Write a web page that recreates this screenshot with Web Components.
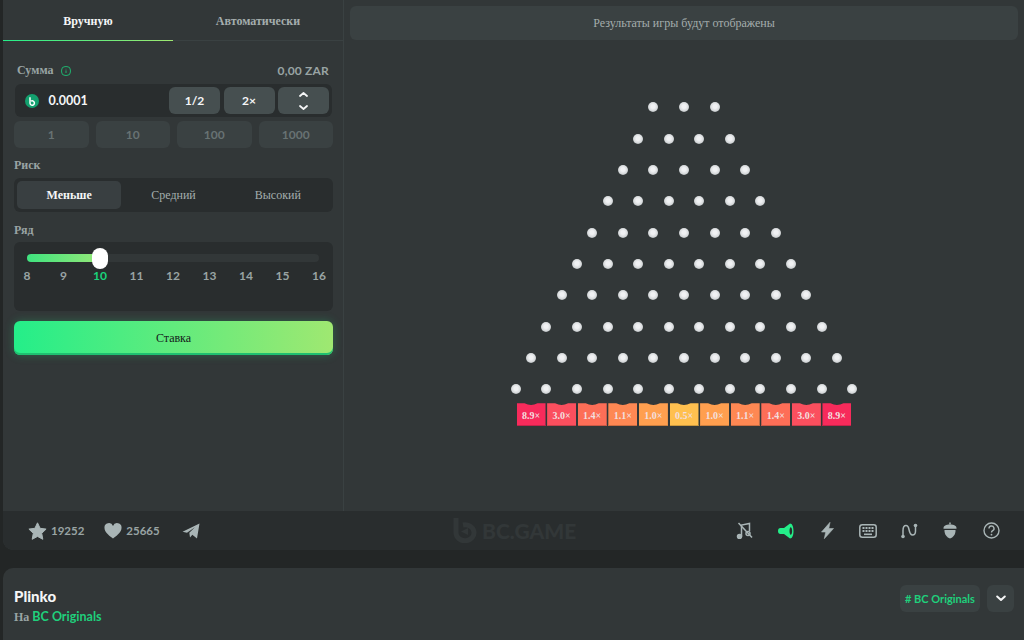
<!DOCTYPE html>
<html lang="ru">
<head>
<meta charset="utf-8">
<title>Plinko</title>
<style>
  html, body { margin: 0; height: 100%; background: #232626; overflow: hidden; }
  body { font-family: "Liberation Serif", serif; color: #b3bec1; }
  plinko-page { display: block; }
</style>
</head>
<body>
<plinko-page></plinko-page>
<script>
const LATIN = `Lato, "Liberation Sans", sans-serif`;

/* ── Left panel: manual / auto tabs ───────────────────── */
class BetTabs extends HTMLElement {
  connectedCallback() {
    this.attachShadow({ mode: "open" }).innerHTML = `
      <style>
        :host { display: flex; height: 41px; border-bottom: 1px solid #3a4142; box-sizing: border-box; font-size: 12px; font-weight: 700; }
        div { flex: 1; display: flex; align-items: center; justify-content: center; padding-top: 3px; color: #a4adad; }
        .on { color: #f5f6f7; position: relative; }
        .on::after { content: ""; position: absolute; left: 0; right: 0; bottom: -1px; height: 1px; background: linear-gradient(90deg, #24ee89, #9fe871); }
      </style>
      <div class="on">Вручную</div><div>Автоматически</div>`;
  }
}
customElements.define("bet-tabs", BetTabs);

/* ── Amount field with quick buttons ──────────────────── */
class BetAmount extends HTMLElement {
  connectedCallback() {
    this.attachShadow({ mode: "open" }).innerHTML = `
      <style>
        :host { display: block; }
        .head { display: flex; align-items: center; height: 16px; margin: 0 4px 6px 3px; padding-top: 1px; box-sizing: border-box; font-size: 12px; font-weight: 700; color: #99a4a4; }
        .head svg { margin-left: 8px; }
        .head span:last-child { margin-left: auto; font: 700 12px ${LATIN}; color: #99a4a4; letter-spacing: .2px; }
        .field { display: flex; align-items: center; height: 33px; box-sizing: border-box; margin: 0 1px; padding: 3px 3px 3px 10px; background: #292d2e; border-radius: 6px; gap: 3.5px; }
        .coin { width: 14px; height: 14px; margin-right: 6px; flex: none; }
        .val { flex: 1; font: 700 12.5px ${LATIN}; color: #f5f6f7; }
        .btn { width: 51px; height: 27px; border-radius: 6px; background: #464f50; color: #f5f6f7; font: 700 12px ${LATIN}; display: flex; align-items: center; justify-content: center; }
        .arrows { flex-direction: column; gap: 8px; }
        .arrows svg { display: block; }
        .quick { display: grid; grid-template-columns: repeat(4, 1fr); gap: 7px; margin-top: 4px; }
        .quick div { height: 27px; border-radius: 6px; background: #3a4142; color: #687273; font: 700 12px ${LATIN}; display: flex; align-items: center; justify-content: center; }
      </style>
      <div class="head"><span>Сумма</span>
        <svg width="10" height="10" viewBox="0 0 10 10" fill="none"><rect x=".6" y=".6" width="8.8" height="8.8" rx="3.4" stroke="#1fb36f" stroke-width="1"/><path d="M5 4.4V7M5 2.8v.6" stroke="#1fb36f" stroke-width="1"/></svg>
        <span>0,00 ZAR</span></div>
      <div class="field">
        <svg class="coin" viewBox="0 0 14 14"><circle cx="7" cy="7" r="7" fill="#13a06e"/><path d="M5 3.2V9a2.2 2.2 0 1 0 1-1.8" fill="none" stroke="#fff" stroke-width="1.5"/></svg>
        <span class="val">0.0001</span>
        <div class="btn">1/2</div><div class="btn">2×</div>
        <div class="btn arrows">
          <svg width="9" height="5" viewBox="0 0 9 5"><path d="M1 4l3.5-3L8 4" fill="none" stroke="#f5f6f7" stroke-width="1.8" stroke-linecap="round" stroke-linejoin="round"/></svg>
          <svg width="9" height="5" viewBox="0 0 9 5"><path d="M1 1l3.5 3L8 1" fill="none" stroke="#f5f6f7" stroke-width="1.8" stroke-linecap="round" stroke-linejoin="round"/></svg>
        </div>
      </div>
      <div class="quick"><div>1</div><div>10</div><div>100</div><div>1000</div></div>`;
  }
}
customElements.define("bet-amount", BetAmount);

/* ── Risk selector ────────────────────────────────────── */
class BetRisk extends HTMLElement {
  connectedCallback() {
    this.attachShadow({ mode: "open" }).innerHTML = `
      <style>
        :host { display: block; }
        label { display: block; height: 15px; margin-bottom: 6px; font-size: 12px; line-height: 17px; font-weight: 700; color: #99a4a4; }
        .box { display: grid; grid-template-columns: repeat(3, 1fr); height: 34px; box-sizing: border-box; padding: 3px; background: #292d2e; border-radius: 6px; font-size: 12px; color: #a4adad; }
        .box div { display: flex; align-items: center; justify-content: center; border-radius: 5px; }
        .on { background: #393f41; color: #f5f6f7; font-weight: 700; }
      </style>
      <label>Риск</label>
      <div class="box"><div class="on">Меньше</div><div>Средний</div><div>Высокий</div></div>`;
  }
}
customElements.define("bet-risk", BetRisk);

/* ── Row count slider ─────────────────────────────────── */
class BetRows extends HTMLElement {
  connectedCallback() {
    const marks = [8, 9, 10, 11, 12, 13, 14, 15, 16];
    this.attachShadow({ mode: "open" }).innerHTML = `
      <style>
        :host { display: block; }
        label { display: block; height: 15px; margin-bottom: 6px; font-size: 12px; line-height: 19px; font-weight: 700; color: #99a4a4; }
        .box { height: 69px; box-sizing: border-box; padding: 12px 14px 0 13px; background: #292d2e; border-radius: 6px; }
        .track { position: relative; height: 8px; border-radius: 4px; background: #323738; }
        .fill { width: 25%; height: 100%; border-radius: 4px 0 0 4px; background: linear-gradient(90deg, #3fe37f, #95e878); }
        .thumb { position: absolute; left: 25%; top: -6.5px; width: 16px; height: 21px; margin-left: -8px; border-radius: 8px; background: #fff; }
        .marks { display: flex; justify-content: space-between; margin: 6px -8px 0; font: 700 12px ${LATIN}; color: #99a4a4; }
        .marks span { width: 16px; text-align: center; }
        .marks .on { color: #19d37a; }
      </style>
      <label>Ряд</label>
      <div class="box">
        <div class="track"><div class="fill"></div><div class="thumb"></div></div>
        <div class="marks">${marks.map(m => `<span class="${m === 10 ? "on" : ""}">${m}</span>`).join("")}</div>
      </div>`;
  }
}
customElements.define("bet-rows", BetRows);

/* ── Bet button ───────────────────────────────────────── */
class BetButton extends HTMLElement {
  connectedCallback() {
    this.attachShadow({ mode: "open" }).innerHTML = `
      <style>
        :host { display: flex; align-items: center; justify-content: center; height: 34px; border-radius: 6px; font-size: 12px; color: #14191a;
          background: linear-gradient(90deg, #24ee89, #9fe871);
          box-shadow: inset 0 -2px 0 #1fc070, 0 0 10px rgba(36,238,137,.25); }
      </style><slot></slot>`;
  }
}
customElements.define("bet-button", BetButton);

/* ── Left panel ───────────────────────────────────────── */
class BetPanel extends HTMLElement {
  connectedCallback() {
    this.attachShadow({ mode: "open" }).innerHTML = `
      <style>
        :host { display: block; width: 341px; flex: none; box-sizing: border-box; border-right: 1px solid #3a4142; }
        .body { display: flex; flex-direction: column; padding: 21px 10px 0 11px; }
        bet-risk { margin-top: 9px; }
        bet-rows { margin-top: 9px; }
        bet-button { margin-top: 10px; }
      </style>
      <bet-tabs></bet-tabs>
      <div class="body">
        <bet-amount></bet-amount>
        <bet-risk></bet-risk>
        <bet-rows></bet-rows>
        <bet-button>Ставка</bet-button>
      </div>`;
  }
}
customElements.define("bet-panel", BetPanel);

/* ── Plinko board: pegs and multipliers ───────────────── */
class PlinkoBoard extends HTMLElement {
  connectedCallback() {
    const buckets = [
      ["8.9", "#f72b5b", "#c4234a"], ["3.0", "#fb4f5e", "#c8404c"], ["1.4", "#fd6e57", "#cb5946"],
      ["1.1", "#fe8853", "#cb6d42"], ["1.0", "#ff9f4f", "#cc7f3f"], ["0.5", "#ffc04f", "#cc9a3f"],
      ["1.0", "#ff9f4f", "#cc7f3f"], ["1.1", "#fe8853", "#cb6d42"], ["1.4", "#fd6e57", "#cb5946"],
      ["3.0", "#fb4f5e", "#c8404c"], ["8.9", "#f72b5b", "#c4234a"],
    ];
    let rows = "";
    for (let r = 0; r < 10; r++) {
      rows += `<div class="row">${"<i></i>".repeat(r + 3)}</div>`;
    }
    this.attachShadow({ mode: "open" }).innerHTML = `
      <style>
        :host { display: flex; flex: 1; flex-direction: column; min-width: 0; padding: 6px 6px 0; box-sizing: border-box; }
        .note { height: 34px; flex: none; display: flex; align-items: center; justify-content: center; border-radius: 6px; background: #3a4142; font-size: 12px; color: #a4adad; }
        .pegs { display: flex; flex-direction: column; align-items: center; gap: 21.33px; margin-top: 62.4px; }
        .row { display: flex; gap: 20.6px; height: 10px; }
        i { width: 10px; height: 10px; border-radius: 50%; background: radial-gradient(circle at 50% 45%, #f0f1f3 25%, #d5d8da 60%, #6f7677 100%); }
        .buckets { display: flex; justify-content: center; gap: 1.6px; margin-top: 9px; }
        .bucket { width: 29px; height: 23px; box-sizing: border-box; padding-top: 2px; display: flex; align-items: center; justify-content: center;
          font-size: 10px; font-weight: 700; color: #f3dfdf;
          clip-path: path("M0 0H8Q14.5 3.500 21 0H29V23H0Z"); }
      </style>
      <div class="note">Результаты игры будут отображены</div>
      <div class="pegs">${rows}</div>
      <div class="buckets">${buckets.map(([v, c, d]) =>
        `<div class="bucket" style="background:${c};box-shadow:inset 0 -1px 0 ${d}">${v}×</div>`).join("")}</div>`;
  }
}
customElements.define("plinko-board", PlinkoBoard);

/* ── Bottom toolbar ───────────────────────────────────── */
class GameToolbar extends HTMLElement {
  connectedCallback() {
    const c = "#a9b5b6";
    this.attachShadow({ mode: "open" }).innerHTML = `
      <style>
        :host { display: flex; position: relative; align-items: center; height: 39px; box-sizing: border-box; padding: 0 12.5px 0 25px; background: #292d2e; font: 700 11.5px ${LATIN}; color: #99a4a4; border-radius: 0 0 0 10px; }
        .stat { display: flex; align-items: center; gap: 4px; margin-right: 20px; }
        svg { display: block; }
        .logo { position: absolute; left: 450px; top: 7px; display: flex; align-items: center; gap: 5px; font: 900 21px ${LATIN}; color: #323738; }
        .tools { margin-left: auto; display: flex; align-items: center; }
        .tools span { width: 41px; display: flex; justify-content: center; }
      </style>
      <span class="stat"><svg width="19" height="18" viewBox="0 0 19 18"><path d="M9.5.8l2.600 5.500 6 .8-4.400 4.200 1.100 6-5.300-2.900-5.300 2.900 1.100-6L.9 7.100l6-.8z" fill="${c}" stroke="${c}" stroke-linejoin="round"/></svg>19252</span>
      <span class="stat"><svg width="18" height="16" viewBox="0 0 18 16"><path d="M9 15.500C3.500 11.500.5 8.600.5 5A4.400 4.400 0 0 1 9 3a4.400 4.400 0 0 1 8.500 2c0 3.600-3 6.500-8.500 10.500z" fill="${c}"/></svg>25665</span>
      <svg width="18" height="16" viewBox="0 0 18 16" style="margin-left:2px"><path d="M.5 8.700L17.500.5 15 15.500 10.300 11.700 8 14.500 7.300 9.800 13 4.300 5 9.800z" fill="${c}"/></svg>
      <div class="logo">
        <svg width="24" height="25" viewBox="0 0 24 25" fill="none"><path d="M3 0v15a9 8 0 1 0 7-8" stroke="#323738" stroke-width="5"/><path d="M8 13.500l7-3.500v7z" fill="#323738"/></svg>
        BC.GAME
      </div>
      <div class="tools">
        <span><svg width="18" height="17" viewBox="0 0 18 17" fill="none" stroke="${c}" stroke-width="1.500"><circle cx="3.500" cy="14.500" r="2" fill="${c}"/><path d="M5.500 14.500V3l8-1.500V9"/><circle cx="12" cy="11.500" r="2"/><path d="M2.500 1l13.500 14.500"/></svg></span>
        <span><svg width="16" height="16" viewBox="0 0 16 16"><path d="M2.500 5H6L12 .5c2.300 0 3.500 3.300 3.500 7.500s-1.200 7.500-3.500 7.500L6 11H2.500A2.500 3 0 0 1 2.500 5z" fill="#24ee89"/><path d="M12.800 4c.9.6 1.300 2.300 1.300 4s-.4 3.400-1.300 4c-.9-.6-1.300-2.300-1.300-4s.4-3.400 1.300-4z" fill="#292d2e"/></svg></span>
        <span><svg width="13" height="17" viewBox="0 0 13 17"><path d="M9 .3L.5 10h4.200L3.300 16.700 12.500 6.500H7.800z" fill="${c}" stroke="${c}" stroke-width=".6" stroke-linejoin="round"/></svg></span>
        <span><svg width="18" height="14" viewBox="0 0 18 14" fill="none"><rect x=".8" y=".8" width="16.400" height="12.400" rx="2.500" stroke="${c}" stroke-width="1.500"/><path d="M3.500 4h11M3.500 7h11" stroke="${c}" stroke-width="2" stroke-dasharray="2 1"/><path d="M5 10.300h8" stroke="${c}" stroke-width="1.600"/></svg></span>
        <span><svg width="17" height="16" viewBox="0 0 17 16" fill="none"><path d="M2 13V7.500C2 4 3.500 2.500 5 2.500s2.500 1.300 3 4 1.500 5.500 3.500 5.500 3-2 3-4V4" stroke="${c}" stroke-width="1.500"/><circle cx="2" cy="13.500" r="1.800" fill="${c}"/><circle cx="14.500" cy="2.500" r="1.800" fill="${c}"/></svg></span>
        <span><svg width="14" height="17" viewBox="0 0 14 17"><path d="M7 .5v2" stroke="${c}" stroke-width="1.500"/><path d="M.5 6c0-2 2.500-3.500 6.500-3.500s6.500 1.500 6.500 3.500v.8H.5z" fill="${c}"/><path d="M1.500 8h11c.3 4.500-2.500 7.500-5.500 8.500C4 15.500 1.200 12.500 1.500 8z" fill="${c}"/></svg></span>
        <span><svg width="17" height="17" viewBox="0 0 17 17" fill="none"><circle cx="8.500" cy="8.500" r="7.500" stroke="${c}" stroke-width="1.400"/><path d="M6 6.500a2.500 2.500 0 1 1 3.700 2.200c-.8.500-1.200 1-1.200 1.900" stroke="${c}" stroke-width="1.400"/><circle cx="8.500" cy="12.700" r=".9" fill="${c}"/></svg></span>
      </div>`;
  }
}
customElements.define("game-toolbar", GameToolbar);

/* ── Info strip under the game ────────────────────────── */
class GameInfo extends HTMLElement {
  connectedCallback() {
    this.attachShadow({ mode: "open" }).innerHTML = `
      <style>
        :host { display: flex; align-items: flex-start; height: 72px; box-sizing: border-box; margin: 18px 0 0 3px; padding: 17px 10px 0 11px; background: #323738; border-radius: 10px 0 0 0; }
        h1 { margin: 0; font: 900 15px/22px ${LATIN}; color: #f5f6f7; }
        p { margin: 2px 0 0; font-size: 12px; line-height: 15px; font-weight: 700; color: #99a4a4; }
        p b { font: 700 12.500px ${LATIN}; color: #1fd07c; }
        .right { margin-left: auto; display: flex; gap: 7px; }
        .right div { height: 27px; border-radius: 6px; background: #3a4142; display: flex; align-items: center; justify-content: center; }
        .tag { width: 80px; font: 700 11px ${LATIN}; color: #1fd07c; }
        .more { width: 27px; }
      </style>
      <div><h1>Plinko</h1><p>На <b>BC Originals</b></p></div>
      <div class="right"><div class="tag"># BC Originals</div>
        <div class="more"><svg width="10" height="7" viewBox="0 0 10 7"><path d="M1.200 1.500L5 5l3.800-3.500" fill="none" stroke="#f5f6f7" stroke-width="2" stroke-linecap="round" stroke-linejoin="round"/></svg></div>
      </div>`;
  }
}
customElements.define("game-info", GameInfo);

/* ── Page ─────────────────────────────────────────────── */
class PlinkoPage extends HTMLElement {
  connectedCallback() {
    this.attachShadow({ mode: "open" }).innerHTML = `
      <style>
        :host { display: block; width: 1024px; height: 640px; overflow: hidden; }
        .game { margin-left: 3px; height: 550px; display: flex; flex-direction: column; background: #323738; border-radius: 0 0 0 10px; overflow: hidden; }
        .main { flex: 1; display: flex; min-height: 0; }
      </style>
      <div class="game">
        <div class="main"><bet-panel></bet-panel><plinko-board></plinko-board></div>
        <game-toolbar></game-toolbar>
      </div>
      <game-info></game-info>`;
  }
}
customElements.define("plinko-page", PlinkoPage);
</script>
</body>
</html>
